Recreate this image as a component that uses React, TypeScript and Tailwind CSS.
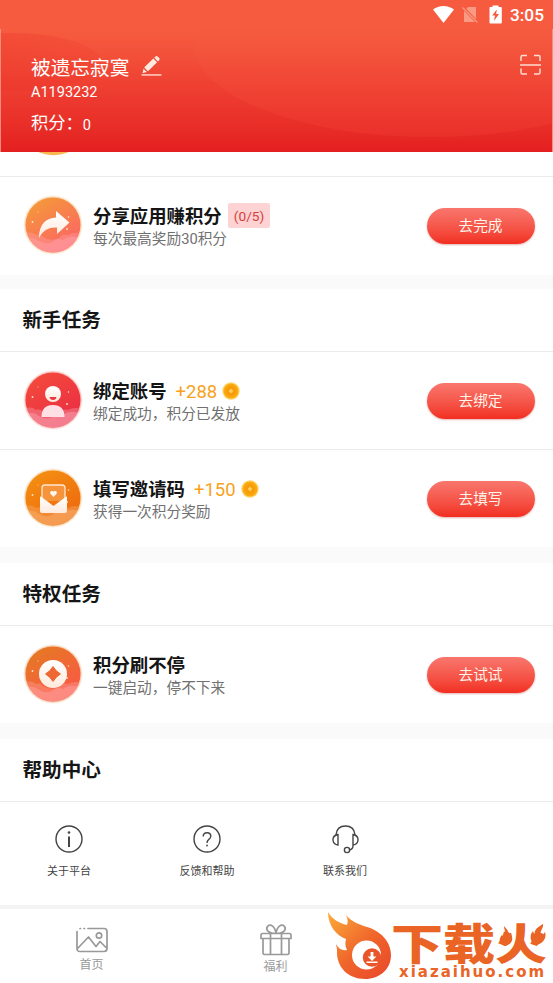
import type { ReactNode } from 'react';

function StatusBar() {
  return (
    <div className="flex h-[29px] items-center justify-end bg-[#f65b3f] pr-[9px] text-white">
      <svg className="h-[17px] w-[21px]" viewBox="0 0 21 17" fill="currentColor">
        <path d="M0 3.6C6-1.2 15-1.2 21 3.6L10.5 17Z" />
      </svg>
      <svg className="ml-[8px] h-[17px] w-[17px]" viewBox="0 0 17 17" fill="none">
        <path d="M6 1H14V16H2V5Z" fill="#f99a85" />
        <path d="M0 0.5L16 17" stroke="#f65b3f" strokeWidth="3" />
        <path d="M0.5 1.5L15.5 16.5" stroke="#f99a85" strokeWidth="1.2" />
      </svg>
      <svg className="ml-[10px] h-[19px] w-[13px]" viewBox="0 0 13 19" fill="currentColor">
        <path d="M3.5 2V0.5h6V2H12q.8 0 .8.8V17.7q0 .8-.8.8H1.3q-.8 0-.8-.8V2.8q0-.8.8-.8Z" />
        <path d="M7.8 4.5L3.2 10.5H6L5 16L10 9H7.2Z" fill="#f65b3f" />
      </svg>
      <span className="ml-[8px] translate-y-[1px] text-[17.3px] leading-none font-medium">3:05</span>
    </div>
  );
}

function Header() {
  return (
    <header className="relative h-[123px] overflow-hidden border-x border-[#f58b78] bg-linear-to-b from-[#f65c3f] via-[#ee3d31] to-[#e41f20] text-white">
      <svg className="absolute inset-0 h-full w-full" viewBox="0 0 551 123" preserveAspectRatio="none">
        <defs>
          <linearGradient id="glow" x1="0" y1="0" x2="0" y2="1">
            <stop offset="0" stopColor="#f56b47" stopOpacity="0.9" />
            <stop offset="0.5" stopColor="#f4573e" stopOpacity="0.6" />
            <stop offset="1" stopColor="#f03a31" stopOpacity="0.4" />
          </linearGradient>
          <linearGradient id="shade" x1="0" y1="0" x2="1" y2="0">
            <stop offset="0" stopColor="#ec2f27" stopOpacity="0.4" />
            <stop offset="1" stopColor="#ec2f27" stopOpacity="0.15" />
          </linearGradient>
        </defs>
        <ellipse cx="429" cy="15" rx="236" ry="93" fill="url(#glow)" />
        <ellipse cx="10" cy="33" rx="90" ry="29" fill="url(#shade)" />
      </svg>
      <div className="relative flex justify-between pt-[25px] pr-[11px] pl-[30px]">
        <div>
          <div className="flex h-[30px] items-center">
            <span className="text-[19.7px] leading-[30px]">被遗忘寂寞</span>
            <svg className="ml-[12px] h-[22px] w-[21px] -translate-y-[3px]" viewBox="0 0 21 22" fill="#ffeadf">
              <path d="M14.5 1.5q1-1 2.2 0l1.5 1.5q1 1.1 0 2.2l-1.2 1.2-3.7-3.7ZM12.3 3.6l3.8 3.7L7 16.2 3.2 12.6ZM2.5 13.7l3.4 3.2-4.4 1.3Z" />
              <path d="M0.5 19.3H20.5V20.6H0.5Z" />
            </svg>
          </div>
          <div className="text-[14.5px] leading-[17px]">A1193232</div>
          <div className="mt-[10px] flex h-[26px] items-center">
            <span className="text-[17.3px]">积分：</span>
            <span className="translate-y-[2px] text-[14.6px]">0</span>
          </div>
        </div>
        <svg className="h-[22px] w-[21px]" viewBox="0 0 21 22" fill="none" stroke="#ffdcd2" strokeWidth="1.5">
          <path d="M1 7V3q0-1.500 1.500-1.500H7M14 1.500h4.500Q20 1.500 20 3V7M1 14.500v4Q1 20 2.500 20H7M14 20h4.500q1.500 0 1.500-1.500v-4M0 11H21" />
        </svg>
      </div>
    </header>
  );
}

function Badge({ id, from, to, mist, children }: { id: string; from: string; to: string; mist: string; children: ReactNode }) {
  return (
    <svg className="h-[60px] w-[60px] shrink-0 -translate-y-[1px]" viewBox="0 0 60 60">
      <defs>
        <linearGradient id={id} x1="0.2" y1="0" x2="0.8" y2="1">
          <stop offset="0" stopColor={from} />
          <stop offset="1" stopColor={to} />
        </linearGradient>
        <linearGradient id={`${id}-white`} x1="0" y1="0" x2="0" y2="1">
          <stop offset="0" stopColor="#fff" />
          <stop offset="1" stopColor="#ffeadd" />
        </linearGradient>
        <clipPath id={`${id}-clip`}>
          <circle cx="30" cy="30" r="27.500" />
        </clipPath>
      </defs>
      <circle cx="30" cy="30" r="29.500" fill={from} opacity="0.15" />
      <circle cx="30" cy="30" r="28.400" fill={from} opacity="0.25" />
      <circle cx="30" cy="30" r="27.500" fill={`url(#${id})`} />
      <g clipPath={`url(#${id}-clip)`} fill={mist}>
        <path d="M0 40q8-5 13 0q4-2 7 2q8 5 16 1q4-5 9-3q7-4 15 0V60H0Z" opacity="0.4" />
        <path d="M0 45q9-5 16 1q7 4 13 1q5-5 11-2q7-6 20-1V60H0Z" opacity="0.5" />
      </g>
      <g fill="#ffe3cf">
        <circle cx="9.500" cy="27" r="0.9" />
        <circle cx="45.500" cy="22" r="0.8" />
        <circle cx="44" cy="34" r="0.9" />
        <circle cx="15" cy="17" r="0.5" />
      </g>
      <g fill={`url(#${id}-white)`}>{children}</g>
    </svg>
  );
}

function Coin() {
  return (
    <svg className="ml-[5px] h-[18px] w-[18px] -translate-y-[1px]" viewBox="0 0 18 18">
      <circle cx="9" cy="9" r="8.700" fill="#ffd46b" />
      <circle cx="9" cy="9" r="7.500" fill="#fba90f" />
      <circle cx="9" cy="9" r="5.300" fill="#f79c0b" />
      <path d="M9 6.500L11.300 9L9 11.500L6.700 9Z" fill="#ffcf5c" />
    </svg>
  );
}

interface TaskProps {
  icon: ReactNode;
  title: string;
  desc: string;
  action: string;
  extra?: ReactNode;
}

function Task({ icon, title, desc, action, extra }: TaskProps) {
  return (
    <div className="flex h-[97px] items-center bg-white pr-[18.5px] pl-[23px]">
      {icon}
      <div className="ml-[10px] flex-1 pt-[2px]">
        <div className="flex h-[26px] items-center">
          <span className="text-[18.4px] leading-[26px] font-bold text-[#151515]">{title}</span>
          {extra}
        </div>
        <div className="-mt-[1px] text-[14.7px] leading-[21px] text-[#707070]">{desc}</div>
      </div>
      <button className="h-[36px] w-[108px] rounded-full bg-linear-to-b from-[#f9766d] to-[#f12d20] text-[14.7px] leading-[36px] text-[#fff3ea] shadow-[0_1px_2px_rgba(180,70,60,0.4)]">
        {action}
      </button>
    </div>
  );
}

function SectionTitle({ children }: { children: ReactNode }) {
  return (
    <h2 className="flex h-[63px] items-center border-b border-[#ebebeb] bg-white pt-[2px] pl-[22.5px] text-[19.6px] font-bold text-[#151515]">
      {children}
    </h2>
  );
}

function Reward({ value }: { value: string }) {
  return (
    <>
      <span className="ml-[9px] text-[18.5px] leading-[26px] text-[#f8a21c]">{value}</span>
      <Coin />
    </>
  );
}

function HelpItem({ label, children }: { label: string; children: ReactNode }) {
  return (
    <div className="flex w-[138px] flex-col items-center pt-[22px]">
      <svg className="h-[30px] w-[30px]" viewBox="0 0 30 30" fill="none" stroke="#444" strokeWidth="1.4">
        {children}
      </svg>
      <span className="mt-[9px] text-[11px] leading-[18px] text-[#444]">{label}</span>
    </div>
  );
}

function Watermark() {
  return (
    <div className="absolute right-0 bottom-0 h-[75px] w-[229px] text-[#ea6426]">
      <svg className="absolute top-0 left-0 h-[75px] w-[229px]" viewBox="324 908 229 75">
        <defs>
          <linearGradient id="flame" x1="0" y1="0" x2="0.9" y2="1">
            <stop offset="0" stopColor="#fbac3b" />
            <stop offset="0.55" stopColor="#f0662b" />
            <stop offset="1" stopColor="#e9492a" />
          </linearGradient>
        </defs>
        <path
          d="M328 912C333 920 339 923 347 925C348 922 348 919 346 915C352 922 358 924 367 927C381 931 391 942 391 955C391 969 380 979 365 979C348 979 336 967 337 950C337 948 336 945 336 944C339 949 342 951 347 950C345 946 345 943 346 939C337 936 328 926 328 912Z"
          fill="url(#flame)"
        />
        <circle cx="366.500" cy="955" r="14.500" fill="#fff" />
        <circle cx="372" cy="957.500" r="9.200" fill="#e95429" />
        <path d="M370.600 952h2.800v4.500h3L372 961l-4.400-4.500h3ZM366.500 961.500h11v1.600h-11Z" fill="#fff" />
        <path
          d="M504 926C511 933 508 936 510 937Q511 935 510 932C514 938 513 944 505 946C498 944 499 938 502 935Q503 937 504 938C507 934 504 930 504 926ZM543 924C536 928 534 931 535 934Q533 933 533 931C529 936 530 942 536 945C543 944 547 938 545 932Q543 935 542 936C538 931 544 929 543 924Z"
          fill="currentColor"
        />
      </svg>
      <div className="relative ml-[67px] w-[162px]">
        <div className="h-[61px] origin-top-left translate-y-[13px] scale-x-[1.04] scale-y-[0.86] text-[50px] leading-[56px] font-black whitespace-nowrap">
          下载火
        </div>
        <div className="-mt-[8px] ml-[8px] font-['DejaVu_Sans'] text-[15px] leading-[23px] font-bold tracking-[2px] whitespace-nowrap">
          xiazaihuo.com
        </div>
      </div>
    </div>
  );
}

export default function App() {
  return (
    <div className="relative h-[983px] w-[553px] overflow-hidden bg-[#fafafa] font-[Roboto,'Noto_Sans_CJK_SC',sans-serif]">
      <StatusBar />
      <Header />

      <main className="flex flex-col">
        <div className="flex h-[25px] items-start overflow-hidden border-b border-[#ebebeb] bg-white pl-[38px]">
          <svg className="h-[4px] w-[31px]" viewBox="0 0 31 4">
            <ellipse cx="15.500" cy="-4" rx="18" ry="7.200" fill="#f9b54e" />
          </svg>
        </div>
        <div className="border-b border-white">
          <Task
            title="分享应用赚积分"
            desc="每次最高奖励30积分"
            action="去完成"
            extra={
              <span className="ml-[6px] h-[25px] -translate-y-[1px] rounded-[2px] bg-[#fdd3d3] px-[6px] text-[13.7px] leading-[26px] text-[#d83d3d]">(0/5)</span>
            }
            icon={
              <Badge id="share" from="#f49a38" to="#fd6068" mist="#ffa0a8">
                <path d="M16 43C16 29 23 23 33 22.500V16L46.500 27.500L34 39V32.500C26 32 20 35 16 43Z" />
              </Badge>
            }
          />
        </div>

        <div className="mt-[14px]">
          <SectionTitle>新手任务</SectionTitle>
          <div className="border-b border-[#ebebeb]">
            <Task
              title="绑定账号"
              desc="绑定成功，积分已发放"
              action="去绑定"
              extra={<Reward value="+288" />}
              icon={
                <Badge id="bind" from="#f44b3b" to="#e92b45" mist="#f7a0b0">
                  <circle cx="30" cy="24" r="8" />
                  <path d="M18.500 47q0-12 11.500-12t11.500 12Z" fill="#ffe0e5" />
                  <path d="M26.500 27h7q-.5 3-3.500 3t-3.500-3Z" fill="#ee3540" />
                </Badge>
              }
            />
          </div>
          <Task
            title="填写邀请码"
            desc="获得一次积分奖励"
            action="去填写"
            extra={<Reward value="+150" />}
            icon={
              <Badge id="invite" from="#f49012" to="#ed650d" mist="#f7b06f">
                <path d="M19 33V20q0-3 3-3h17q3 0 3 3v13" fill="#f5943a" stroke="#ffe6d0" strokeWidth="1.3" />
                <path d="M30.500 29l-3-3q-1-3 1.500-3 1.500 0 1.500 1 0-1 1.500-1 2.500 0 1.500 3Z" />
                <path d="M17 29q0-1 1.500 0L30.500 38l12-9q1.500-1 1.500 0V43q0 2-2 2H19q-2 0-2-2Z" />
              </Badge>
            }
          />
        </div>

        <div className="mt-[16px]">
          <SectionTitle>特权任务</SectionTitle>
          <Task
            title="积分刷不停"
            desc="一键启动，停不下来"
            action="去试试"
            icon={
              <Badge id="auto" from="#e57a22" to="#fb5549" mist="#ffa09e">
                <circle cx="30" cy="30" r="14" />
                <path d="M30 22.500Q32.500 27 37.500 30Q32.500 33 30 37.500Q27.500 33 22.500 30Q27.500 27 30 22.500Z" fill="#ee6834" stroke="#ee6834" strokeLinejoin="round" />
              </Badge>
            }
          />
        </div>

        <div className="mt-[16px]">
          <SectionTitle>帮助中心</SectionTitle>
          <div className="flex h-[103px] bg-white">
            <HelpItem label="关于平台">
              <circle cx="15" cy="15" r="13" />
              <path d="M15 12.500V23" strokeWidth="2" />
              <circle cx="15" cy="8.500" r="1.300" fill="#444" stroke="none" />
            </HelpItem>
            <HelpItem label="反馈和帮助">
              <circle cx="15" cy="15" r="13" />
              <path d="M11.200 12.500q0-3.800 3.800-3.800t3.800 3.600q0 1.800-2.200 3.300Q15 16.700 15 19" />
              <circle cx="15" cy="21.500" r="0.9" fill="#444" stroke="none" />
            </HelpItem>
            <HelpItem label="联系我们">
              <path d="M6 11.500V10.500Q7 2 15.500 2t9.500 8.500v1M8 10.500v10.500Q3.300 20.500 3 16t5-5.500ZM23 10.500v10.500Q27.700 20.500 28 16t-5-5.500ZM23 20.500v1.500q0 3-3.500 4" />
              <circle cx="17" cy="26" r="2.600" />
            </HelpItem>
          </div>
        </div>
      </main>

      <nav className="flex h-[78px] border-t-4 border-[#f3f3f3] bg-white text-[#999]">
        <div className="flex w-[183px] flex-col items-center pt-[18px]">
          <svg className="h-[26px] w-[32px]" viewBox="0 0 32 26" fill="none" stroke="currentColor" strokeWidth="1.7" strokeLinecap="round" strokeLinejoin="round">
            <path d="M12 1.500H28q3 0 3 3v17q0 3-3 3H4q-3 0-3-3V4.500M4 1.500h.5M8 1.500h.5M2 21L12.500 10l7.500 9.500L24 14.500l6 6" />
            <circle cx="23" cy="8.500" r="2.700" />
          </svg>
          <span className="mt-[3px] text-[12px] leading-[18px]">首页</span>
        </div>
        <div className="flex w-[185px] flex-col items-center pt-[15px]">
          <svg className="h-[32px] w-[32px]" viewBox="0 0 32 32" fill="none" stroke="currentColor" strokeWidth="1.7" strokeLinejoin="round">
            <path d="M2.500 9.500h27q1.500 0 1.500 1.500v3.500H1V11q0-1.500 1.500-1.500ZM3 15v14q0 1.500 1.500 1.500h23q1.500 0 1.500-1.500V15M10.500 10v20M21.500 10v20M16 9.500C9 9.500 5 6 7.500 2.500S15 2 16 9.500C17 2 22 -1 24.500 2.500S23 9.500 16 9.500Z" />
          </svg>
          <span className="mt-[2px] text-[12px] leading-[18px]">福利</span>
        </div>
      </nav>
      <Watermark />
    </div>
  );
}
